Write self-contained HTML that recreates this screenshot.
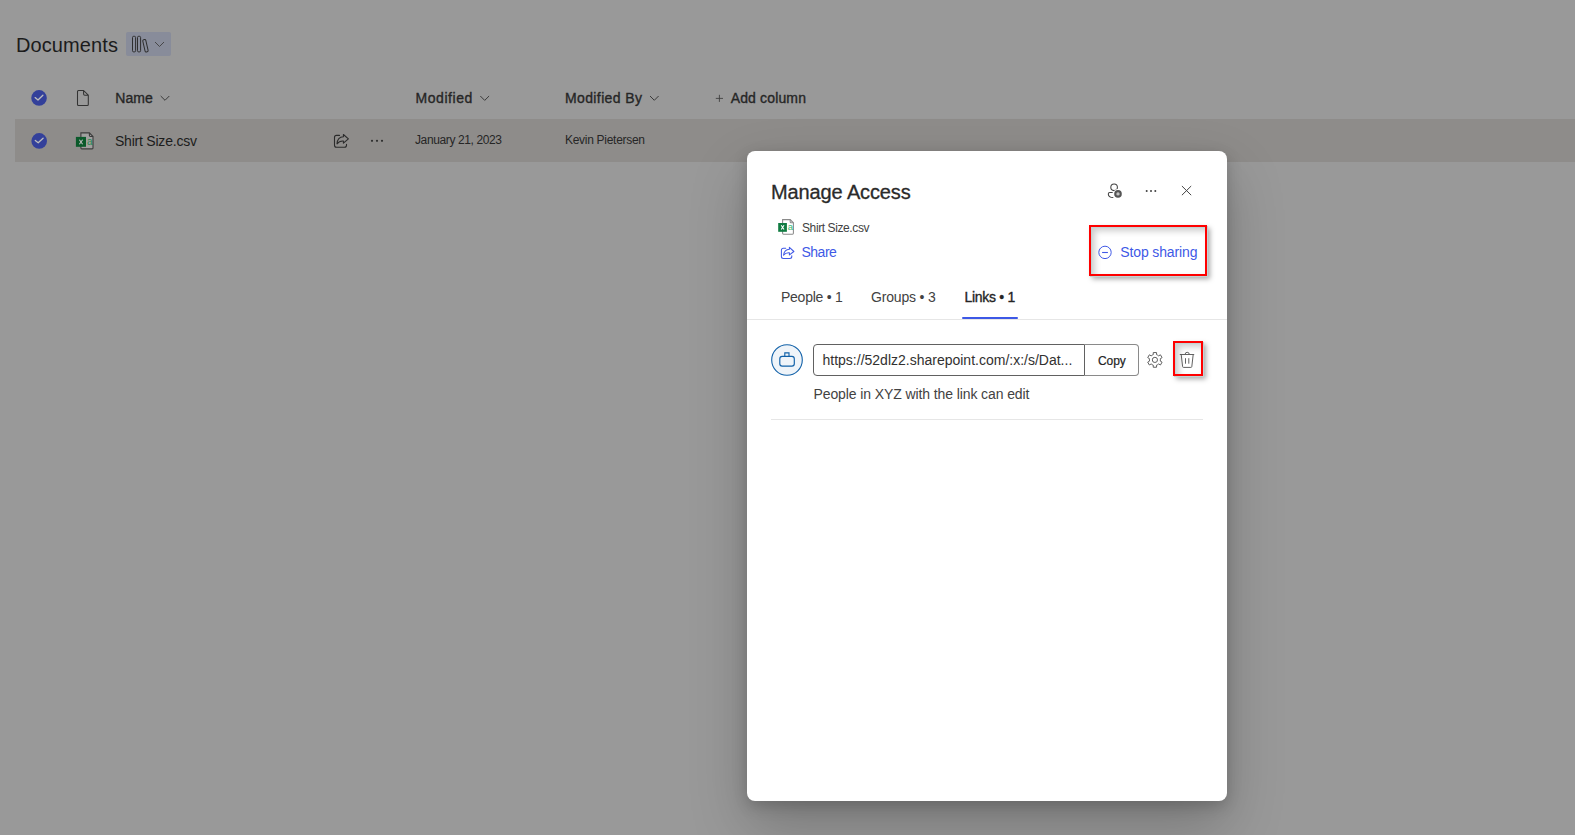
<!DOCTYPE html>
<html><head><meta charset="utf-8">
<style>
html,body{margin:0;padding:0;}
body{width:1575px;height:835px;overflow:hidden;position:relative;background:#999999;font-family:"Liberation Sans",sans-serif;}
.t{position:absolute;white-space:nowrap;line-height:1;}
.abs{position:absolute;}
svg{position:absolute;overflow:visible;}
#row{position:absolute;left:15px;top:119px;width:1560px;height:43px;background:#8e8c8a;}
#dlg{position:absolute;left:747px;top:151px;width:480px;height:650px;background:#fff;border-radius:8px;
 box-shadow:0 25.6px 57.6px rgba(0,0,0,.22),0 4.8px 14.4px rgba(0,0,0,.18);}
.redbox{position:absolute;border:2px solid #ff0000;box-shadow:1px 1px 0 #c3d3d3,3px 3px 5px rgba(0,0,0,.34), inset 1px 1px 0 #c3d3d3, inset 4px 4px 6px rgba(0,0,0,.2);}
</style></head><body>

<!-- page -->
<div class="t" style="left:16px;top:35px;font-size:20px;color:#1c1c1c;letter-spacing:0.1px">Documents</div>
<div class="abs" style="left:126px;top:32px;width:45px;height:24px;background:#888c9a;border-radius:2px"></div>
<svg style="left:0;top:0" width="1" height="1">
 <g fill="none" stroke="#2e2e2e" stroke-width="1">
  <rect x="132.5" y="36.3" width="3.1" height="15.6" rx="1.2"/>
  <rect x="137.5" y="36.3" width="3.1" height="15.6" rx="1.2"/>
  <rect x="143.9" y="39.4" width="3.1" height="12.6" rx="1.2" transform="rotate(-13 145.45 45.7)"/>
  <path d="M155 42 L159.5 46.5 L164 42" stroke="#3f3f3f" stroke-width="0.9"/>
 </g>
</svg>

<!-- header row -->
<svg style="left:0;top:0" width="1" height="1">
 <circle cx="39.05" cy="97.9" r="7.8" fill="#33409a"/>
 <path d="M35.1 97.6 L38 100 L42.9 95.2" fill="none" stroke="#bdbdbd" stroke-width="1.3" stroke-linecap="round" stroke-linejoin="round"/>
 <path d="M77.5 91.5 Q77.5 90.5 78.5 90.5 H83.6 L88.3 95.2 V104.4 Q88.3 105.4 87.3 105.4 H78.5 Q77.5 105.4 77.5 104.4 Z M83.6 90.5 V94 Q83.6 95.2 84.8 95.2 H88.3" fill="none" stroke="#333" stroke-width="1.05" stroke-linejoin="round"/>
</svg>
<div class="t" style="left:115.3px;top:91px;font-size:14px;color:#262626;-webkit-text-stroke:0.35px #262626;letter-spacing:0.05px">Name</div>
<svg style="left:0;top:0" width="1" height="1"><path d="M160.7 96 L165 100.3 L169.3 96" fill="none" stroke="#3a3a3a" stroke-width="1"/></svg>
<div class="t" style="left:415.5px;top:91px;font-size:14px;color:#262626;-webkit-text-stroke:0.35px #262626;letter-spacing:0.55px">Modified</div>
<svg style="left:0;top:0" width="1" height="1"><path d="M480.3 96 L484.7 100.4 L489.1 96" fill="none" stroke="#3a3a3a" stroke-width="1"/></svg>
<div class="t" style="left:565px;top:91px;font-size:14px;color:#262626;-webkit-text-stroke:0.35px #262626;letter-spacing:0.38px">Modified By</div>
<svg style="left:0;top:0" width="1" height="1"><path d="M650 96 L654.3 100.3 L658.6 96" fill="none" stroke="#3a3a3a" stroke-width="1"/></svg>
<svg style="left:0;top:0" width="1" height="1"><path d="M719.4 94.8 V101.9 M715.8 98.4 H723" fill="none" stroke="#3c3c3c" stroke-width="0.85"/></svg>
<div class="t" style="left:730.7px;top:91px;font-size:14px;color:#262626;-webkit-text-stroke:0.35px #262626;letter-spacing:0.15px">Add column</div>

<!-- selected row -->
<div id="row"></div>
<svg style="left:0;top:0" width="1" height="1">
 <circle cx="39.2" cy="140.9" r="7.8" fill="#33409a"/>
 <path d="M35.3 140.5 L38.2 142.8 L43.1 138.2" fill="none" stroke="#bdbdbd" stroke-width="1.3" stroke-linecap="round" stroke-linejoin="round"/>
 <!-- excel icon -->
 <path d="M80.9 132.9 H89.4 L93 136.5 V148 Q93 148.9 92.1 148.9 H81.8 Q80.9 148.9 80.9 148 Z" fill="#a0a09f" stroke="#3c3c3c" stroke-width="1.1"/>
 <path d="M89.4 132.9 V135.6 Q89.4 136.5 90.3 136.5 H93" fill="none" stroke="#3c3c3c" stroke-width="1.1"/>
 <rect x="75.9" y="136.9" width="10.1" height="9.9" fill="#0b5a2b"/>
 <path d="M79.4 139.7 L82.6 144.2 M82.6 139.7 L79.4 144.2" stroke="#bdbdbd" stroke-width="1.1"/>
 <text x="87.1" y="145" font-family="Liberation Sans" font-size="10" fill="#2a8a52">a</text>
 <!-- share icon -->
 <path d="M339.5 135.4 H336.5 Q334.5 135.4 334.5 137.4 V145.3 Q334.5 147.3 336.5 147.3 H344.5 Q346.5 147.3 346.5 145.3 V144.2" fill="none" stroke="#2b2b2b" stroke-width="1.1" stroke-linecap="round"/>
 <path d="M337 143.8 C337.3 139.5 339.5 137 343.4 136.8 V134.5 L348.4 138.8 L343.4 143.2 V141 C340.5 140.8 338.5 141.8 337 143.8 Z" fill="none" stroke="#2b2b2b" stroke-width="1.1" stroke-linejoin="round"/>
 <circle cx="372" cy="140.8" r="1.1" fill="#2e2e2e"/><circle cx="377" cy="140.8" r="1.1" fill="#2e2e2e"/><circle cx="382" cy="140.8" r="1.1" fill="#2e2e2e"/>
</svg>
<div class="t" style="left:115px;top:134px;font-size:14px;color:#1c1c1c;letter-spacing:-0.22px">Shirt Size.csv</div>
<div class="t" style="left:415px;top:134px;font-size:12px;color:#262626;letter-spacing:-0.38px">January 21, 2023</div>
<div class="t" style="left:565px;top:134px;font-size:12px;color:#262626;letter-spacing:-0.29px">Kevin Pietersen</div>

<!-- dialog -->
<div id="dlg"></div>
<div class="t" style="left:771px;top:182px;font-size:20px;color:#2a2a2a;-webkit-text-stroke:0.3px #2a2a2a;letter-spacing:-0.12px">Manage Access</div>
<svg style="left:0;top:0" width="1" height="1">
 <!-- person gear -->
 <circle cx="1114.1" cy="187.3" r="3.3" fill="none" stroke="#424242" stroke-width="1.05"/>
 <path d="M1112.7 192.4 H1109.8 Q1108.3 192.4 1108.3 193.9 Q1108.3 197.5 1113.3 197.5" fill="none" stroke="#424242" stroke-width="1.05"/>
 <circle cx="1118" cy="193.9" r="4.8" fill="#fff"/>
 <circle cx="1118" cy="193.9" r="3.8" fill="#555"/>
 <circle cx="1118" cy="193.9" r="1.7" fill="#c4c4c4"/>
 <!-- dots -->
 <circle cx="1146.7" cy="191" r="1" fill="#424242"/><circle cx="1151" cy="191" r="1" fill="#424242"/><circle cx="1155.3" cy="191" r="1" fill="#424242"/>
 <!-- close -->
 <path d="M1182.2 186.3 L1190.9 194.9 M1190.9 186.3 L1182.2 194.9" fill="none" stroke="#444" stroke-width="1" stroke-linecap="round"/>
 <!-- excel small -->
 <path d="M782.6 219.6 H790.2 L793.4 222.8 V233.3 Q793.4 234.2 792.5 234.2 H783.5 Q782.6 234.2 782.6 233.3 Z" fill="#fff" stroke="#8a8a8a" stroke-width="1.05"/>
 <path d="M790.2 219.6 V222 Q790.2 222.8 791 222.8 H793.4" fill="none" stroke="#8a8a8a" stroke-width="1.05"/>
 <rect x="778.2" y="223" width="8.7" height="8.8" fill="#107c41"/>
 <path d="M781.2 225.3 L784 229.5 M784 225.3 L781.2 229.5" stroke="#fff" stroke-width="1.1"/>
 <text x="787.8" y="230" font-family="Liberation Sans" font-size="9.5" fill="#33b873">a</text>
 <!-- share blue -->
 <path d="M785.7 248.3 H783.4 Q781.4 248.3 781.4 250.3 V256.5 Q781.4 258.5 783.4 258.5 H789.8 Q791.8 258.5 791.8 256.5 V255.8" fill="none" stroke="#4059e6" stroke-width="1.05" stroke-linecap="round"/>
 <path d="M783.5 255.2 C784 251.5 786.5 249.5 789.4 249.3 V247.3 L793.9 251.5 L789.4 254.9 V252.8 C786.8 252.6 784.8 253.5 783.5 255.2 Z" fill="none" stroke="#4059e6" stroke-width="1.05" stroke-linejoin="round"/>
 <!-- stop sharing -->
 <circle cx="1105" cy="252.4" r="6.2" fill="none" stroke="#4059e6" stroke-width="1"/>
 <path d="M1102.1 252.5 H1107.9" stroke="#4059e6" stroke-width="1.1"/>
</svg>
<div class="t" style="left:802px;top:222px;font-size:12px;color:#424242;letter-spacing:-0.4px">Shirt Size.csv</div>
<div class="t" style="left:801.5px;top:244.6px;font-size:14px;color:#4059e6;letter-spacing:-0.5px">Share</div>
<div class="redbox" style="left:1089px;top:225px;width:114px;height:47px"></div>
<div class="t" style="left:1120.3px;top:245.2px;font-size:14px;color:#4059e6;letter-spacing:-0.13px">Stop sharing</div>

<!-- tabs -->
<div class="t" style="left:781px;top:289.6px;font-size:14px;color:#424242;letter-spacing:-0.25px">People • 1</div>
<div class="t" style="left:871px;top:289.6px;font-size:14px;color:#424242;letter-spacing:-0.18px">Groups • 3</div>
<div class="t" style="left:964.5px;top:289.8px;font-size:14px;color:#242424;-webkit-text-stroke:0.35px #242424;letter-spacing:-0.3px">Links • 1</div>
<div class="abs" style="left:962px;top:317px;width:56px;height:2px;background:#3d58e6;border-radius:1px"></div>
<div class="abs" style="left:747px;top:319px;width:480px;height:1px;background:#e6e6e6"></div>

<!-- link item -->
<svg style="left:0;top:0" width="1" height="1">
 <circle cx="787" cy="360" r="15.3" fill="#eff4f9" stroke="#1060a8" stroke-width="1.1"/>
 <rect x="779.8" y="356.3" width="14.5" height="9.9" rx="2.4" fill="none" stroke="#1060a8" stroke-width="1.15"/>
 <path d="M784.8 356.3 V352.9 H789 V356.3" fill="none" stroke="#1060a8" stroke-width="1.1"/>
</svg>
<div class="abs" style="left:813px;top:344px;width:270px;height:30px;border:1px solid #616161;border-radius:4px 0 0 4px;"></div>
<div class="abs" style="left:1085px;top:344px;width:53px;height:30px;border:1px solid #8a8a8a;border-left:none;border-radius:0 4px 4px 0;"></div>
<div class="t" style="left:822.5px;top:353px;font-size:14px;color:#323130;letter-spacing:0px">https://52dlz2.sharepoint.com/:x:/s/Dat...</div>
<div class="t" style="left:1098px;top:355.3px;font-size:12px;color:#242424;-webkit-text-stroke:0.2px #242424;letter-spacing:-0.05px">Copy</div>
<svg style="left:0;top:0" width="1" height="1">
 <!-- gear -->
 <g transform="translate(1154.9 359.9)" fill="none" stroke="#616161" stroke-width="1">
  <path stroke-linejoin="round" d="M-1.65 -5.25 L-1.65 -7.35 L1.65 -7.35 L1.65 -5.25 A5.5 5.5 0 0 1 3.72 -4.05 L3.72 -4.05 L5.54 -5.10 L7.19 -2.25 L5.37 -1.19 A5.5 5.5 0 0 1 5.37 1.19 L5.37 1.19 L7.19 2.25 L5.54 5.10 L3.72 4.05 A5.5 5.5 0 0 1 1.65 5.25 L1.65 5.25 L1.65 7.35 L-1.65 7.35 L-1.65 5.25 A5.5 5.5 0 0 1 -3.72 4.05 L-3.72 4.05 L-5.54 5.10 L-7.19 2.25 L-5.37 1.19 A5.5 5.5 0 0 1 -5.37 -1.19 L-5.37 -1.19 L-7.19 -2.25 L-5.54 -5.10 L-3.72 -4.05 A5.5 5.5 0 0 1 -1.65 -5.25Z"/>
  <circle r="2.6"/>
 </g>
 <!-- trash -->
 <g fill="none" stroke="#616161" stroke-width="1">
  <path d="M1179.8 354.5 H1194.2 M1185.1 354.5 Q1185.1 352.3 1187.2 352.3 Q1189.3 352.3 1189.3 354.5"/>
  <path d="M1181.2 354.5 L1182.6 366.6 Q1182.7 367.4 1183.5 367.4 H1190.9 Q1191.7 367.4 1191.8 366.6 L1193.2 354.5"/>
  <path d="M1185.5 358.2 V363.7 M1188.8 358.2 V363.7"/>
 </g>
</svg>
<div class="redbox" style="left:1173px;top:341px;width:26px;height:31px"></div>
<div class="t" style="left:813.5px;top:387px;font-size:14px;color:#424242;letter-spacing:-0.1px">People in XYZ with the link can edit</div>
<div class="abs" style="left:771px;top:419px;width:432px;height:1px;background:#e6e6e6"></div>

</body></html>
